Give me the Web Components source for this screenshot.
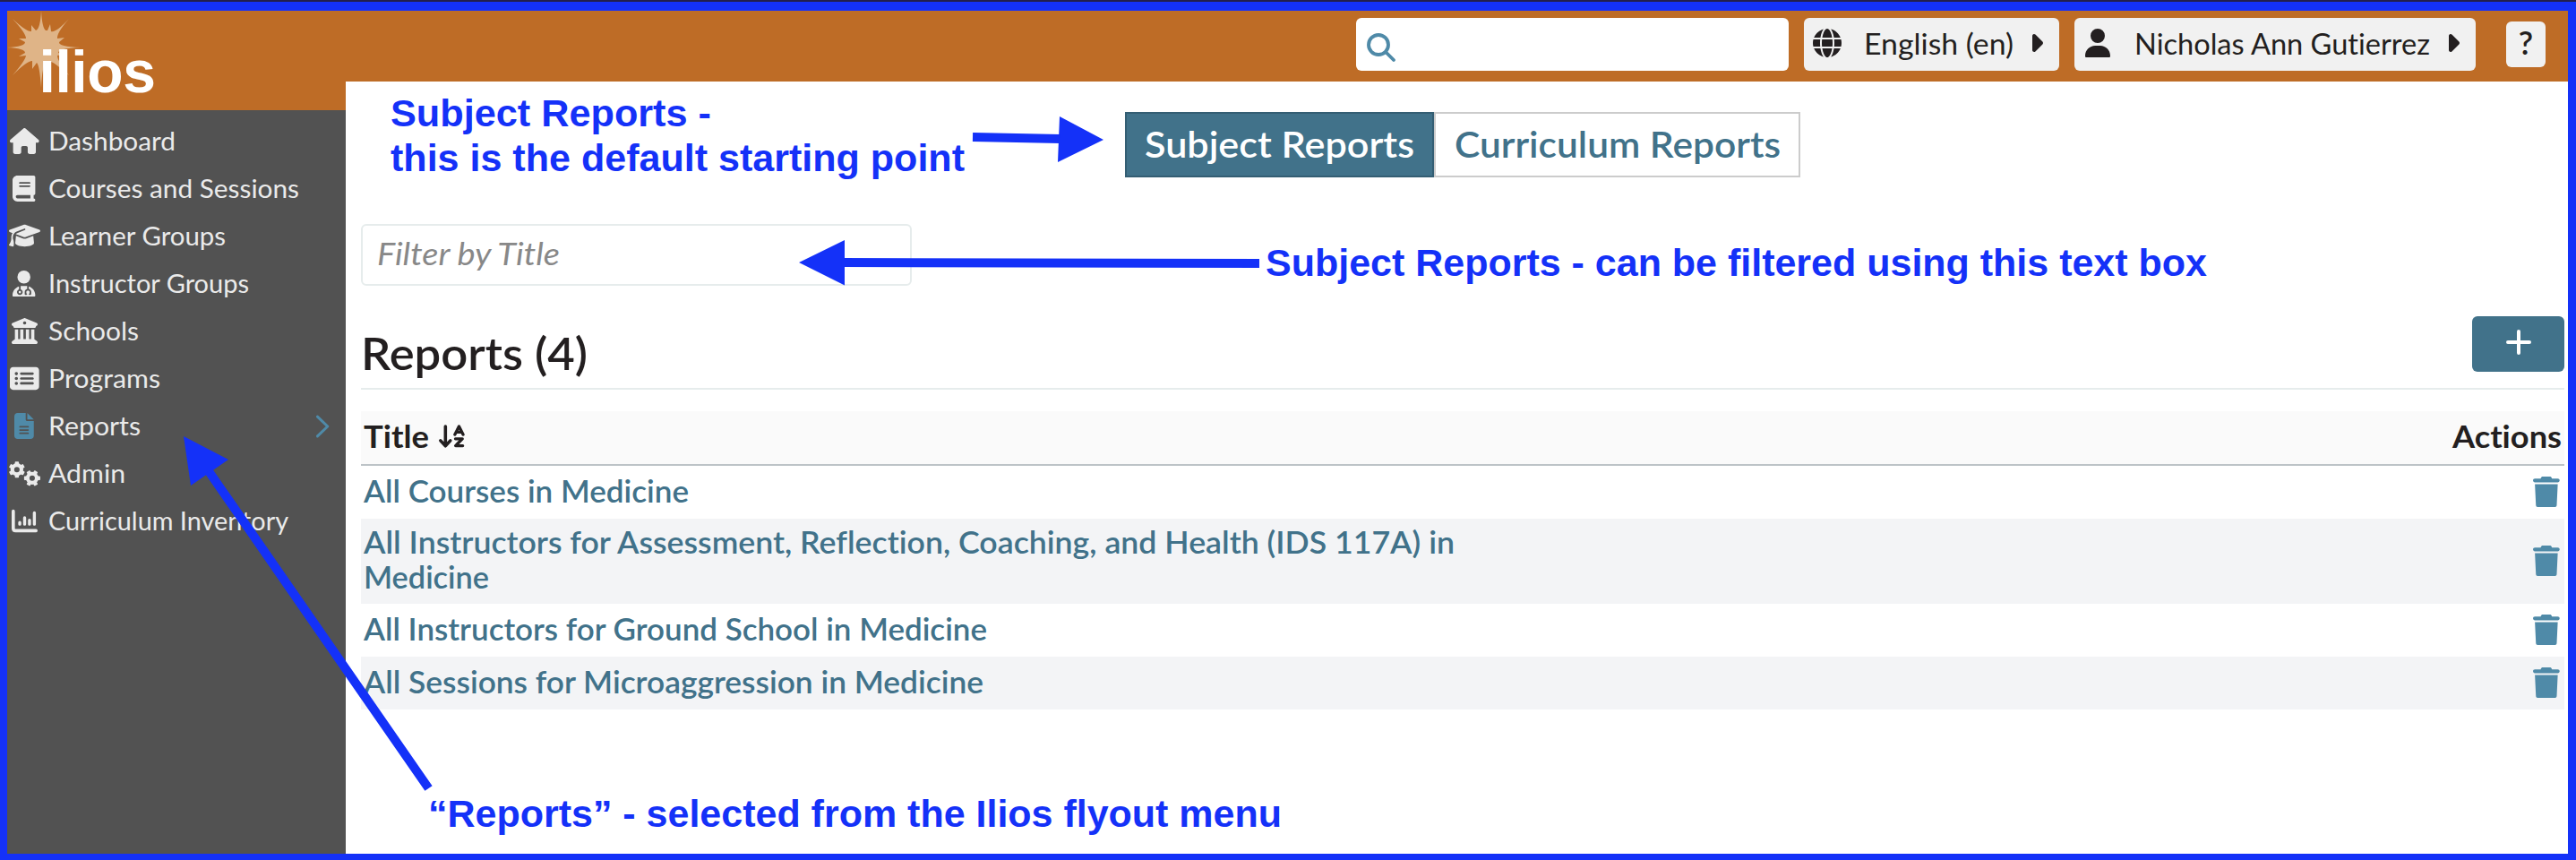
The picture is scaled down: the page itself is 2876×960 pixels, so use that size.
<!DOCTYPE html>
<html lang="en">
<head>
<meta charset="utf-8">
<title>Ilios</title>
<style>
  html, body { margin: 0; height: 100%; }
  body { background: #fff; font-family: Lato, "Noto Sans", sans-serif; font-variant-ligatures: none; color: #231f20; overflow: hidden; }
</style>
</head>
<body>
<ilios-app></ilios-app>
<script>
const shadow = (el, html) => { const r = el.attachShadow({ mode: "open" }); r.innerHTML = html; return r; };

const gear = (cx, cy, r, rot) => {
  let s = `<circle cx="${cx}" cy="${cy}" r="${r * .62}" fill="none" stroke="currentColor" stroke-width="${r * .5}"/>`;
  for (let i = 0; i < 6; i++) {
    s += `<rect x="${cx - r * .27}" y="${cy - r * 1.1}" width="${r * .54}" height="${r * .4}" rx="${r * .1}" fill="currentColor" transform="rotate(${rot + i * 60} ${cx} ${cy})"/>`;
  }
  return s;
};
const p = (d) => `<path fill="currentColor" d="${d}"/>`;
const line = (d, w) => `<path fill="none" stroke="currentColor" stroke-width="${w}" stroke-linecap="round" stroke-linejoin="round" d="${d}"/>`;

const ICONS = {
  house: [576, 512, p("M575.8 255.5c0 18-15 32.1-32 32.1h-32l.7 160.2c0 2.7-.2 5.4-.5 8.1V472c0 22.1-17.9 40-40 40H456c-1.1 0-2.2 0-3.3-.1c-1.4 .1-2.8 .1-4.2 .1H416 392c-22.1 0-40-17.9-40-40V448 384c0-17.7-14.3-32-32-32H256c-17.7 0-32 14.3-32 32v64 24c0 22.1-17.9 40-40 40H160 128.1c-1.5 0-3-.1-4.5-.2c-1.2 .1-2.4 .2-3.6 .2H104c-22.1 0-40-17.9-40-40V360c0-.9 0-1.9 .1-2.8V287.6H32c-18 0-32-14-32-32.1c0-9 3-17 10-24L266.4 8c7-7 15-8 22-8s15 2 21 7L564.8 231.5c8 7 12 15 11 24z")],
  book: [448, 512, p("M96 0C43 0 0 43 0 96V416c0 53 43 96 96 96H384h32c17.7 0 32-14.3 32-32s-14.3-32-32-32V384c17.7 0 32-14.3 32-32V32c0-17.7-14.3-32-32-32H384 96zm0 384H352v64H96c-17.7 0-32-14.3-32-32s14.3-32 32-32zm32-240c0-8.8 7.2-16 16-16H336c8.8 0 16 7.2 16 16s-7.2 16-16 16H144c-8.8 0-16-7.2-16-16zm16 48H336c8.8 0 16 7.2 16 16s-7.2 16-16 16H144c-8.8 0-16-7.2-16-16s7.2-16 16-16z")],
  cap: [640, 512, p("M320 32c-8.1 0-16.1 1.4-23.7 4.1L15.8 137.4C6.3 140.9 0 149.9 0 160s6.3 19.1 15.8 22.6l57.9 20.9C57.3 229.3 48 259.8 48 291.9v28.1c0 28.4-10.8 57.7-22.3 80.8c-6.5 13-13.9 25.8-22.5 37.6C0 442.7-.9 448.3 .9 453.4s6 8.9 11.2 10.2l64 16c4.2 1.1 8.7 .3 12.4-2s6.3-6.1 7.1-10.4c8.6-42.8 4.3-81.2-2.1-108.7C90.3 344.3 86 329.8 80 316.5V291.9c0-30.2 10.2-58.7 27.9-81.5c12.9-15.5 29.6-28 49.2-35.7l157-61.7c8.2-3.2 17.5 .8 20.7 9s-.8 17.5-9 20.7l-157 61.7c-12.4 4.9-23.3 12.4-32.2 21.6l159.6 57.6c7.6 2.7 15.6 4.1 23.7 4.1s16.1-1.4 23.7-4.1L624.2 182.6c9.5-3.4 15.8-12.5 15.8-22.6s-6.3-19.1-15.8-22.6L343.7 36.1C336.1 33.4 328.1 32 320 32zM128 408c0 35.3 86 72 192 72s192-36.7 192-72L496.7 262.6 354.5 314c-11.1 4-22.8 6-34.5 6s-23.5-2-34.5-6L143.3 262.6 128 408z")],
  doctor: [448, 512, p("M224 256a128 128 0 1 0 0-256 128 128 0 1 0 0 256zm-96 55.2C54 332.9 0 401.3 0 482.3C0 498.7 0 512 12 512H436c12 0 12-13.3 12-29.7c0-81-54-149.4-128-171.1V362c27.6 7.1 48 32.2 48 62v40c0 8.8-7.2 16-16 16H336c-8.8 0-16-7.2-16-16s7.2-16 16-16V424c0-17.7-14.3-32-32-32s-32 14.3-32 32v24c8.8 0 16 7.2 16 16s-7.2 16-16 16H256c-8.8 0-16-7.2-16-16V424c0-29.8 20.4-54.9 48-62V304.9c-6-.6-12.1-.9-18.3-.9H178.3c-6.2 0-12.3 .3-18.3 .9v65.4c23.1 6.9 40 28.3 40 53.7c0 30.9-25.1 56-56 56s-56-25.1-56-56c0-25.4 16.9-46.8 40-53.7V311.2zM144 448a24 24 0 1 0 0-48 24 24 0 1 0 0 48z")],
  columns: [512, 512, p("M243.4 2.6l-224 96c-14 6-21.8 21-18.7 35.8S16.8 160 32 160v8c0 13.3 10.7 24 24 24H456c13.3 0 24-10.7 24-24v-8c15.2 0 28.3-10.7 31.3-25.6s-4.8-29.9-18.7-35.8l-224-96c-8-3.4-17.2-3.4-25.2 0zM128 224H64V420.3c-.6 .3-1.2 .7-1.8 1.1l-48 32c-11.7 7.8-17 22.4-12.9 35.9S17.9 512 32 512H480c14.1 0 26.5-9.2 30.6-22.7s-1.1-28.1-12.9-35.9l-48-32c-.6-.4-1.2-.7-1.8-1.1V224H384V416H344V224H280V416H232V224H168V416H128V224zM256 64a32 32 0 1 1 0 64 32 32 0 1 1 0-64z")],
  list: [576, 512, p("M0 96C0 60.7 28.7 32 64 32H512c35.3 0 64 28.7 64 64V416c0 35.3-28.7 64-64 64H64c-35.3 0-64-28.7-64-64V96zM128 288a32 32 0 1 0 0-64 32 32 0 1 0 0 64zm32-128a32 32 0 1 0 -64 0 32 32 0 1 0 64 0zM128 384a32 32 0 1 0 0-64 32 32 0 1 0 0 64zm96-248c-13.3 0-24 10.7-24 24s10.7 24 24 24H448c13.3 0 24-10.7 24-24s-10.7-24-24-24H224zm0 96c-13.3 0-24 10.7-24 24s10.7 24 24 24H448c13.3 0 24-10.7 24-24s-10.7-24-24-24H224zm0 96c-13.3 0-24 10.7-24 24s10.7 24 24 24H448c13.3 0 24-10.7 24-24s-10.7-24-24-24H224z")],
  file: [384, 512, p("M64 0C28.7 0 0 28.7 0 64V448c0 35.3 28.7 64 64 64H320c35.3 0 64-28.7 64-64V160H256c-17.7 0-32-14.3-32-32V0H64zM256 0V128H384L256 0zM112 256H272c8.8 0 16 7.2 16 16s-7.2 16-16 16H112c-8.8 0-16-7.2-16-16s7.2-16 16-16zm0 64H272c8.8 0 16 7.2 16 16s-7.2 16-16 16H112c-8.8 0-16-7.2-16-16s7.2-16 16-16zm0 64H272c8.8 0 16 7.2 16 16s-7.2 16-16 16H112c-8.8 0-16-7.2-16-16s7.2-16 16-16z")],
  gears: [640, 512, gear(162, 168, 150, 0) + gear(474, 344, 150, 30)],
  chart: [512, 512, line("M32 64V400Q32 448 80 448H480", 64) + line("M160 288V320M256 192V320M352 240V320M448 96V320", 60)],
  chevron: [320, 512, line("M48 40L272 256L48 472", 60)],
  globe: [512, 512, p("M352 256c0 22.2-1.2 43.6-3.3 64H163.3c-2.2-20.4-3.3-41.8-3.3-64s1.2-43.6 3.3-64H348.7c2.2 20.4 3.3 41.8 3.3 64zm28.8-64H503.9c5.3 20.5 8.1 41.9 8.1 64s-2.8 43.5-8.1 64H380.8c2.1-20.6 3.2-42 3.2-64s-1.1-43.4-3.2-64zm112.6-32H376.7c-10-63.9-29.8-117.4-55.3-151.6c78.3 20.7 142 77.5 171.9 151.6zm-149.1 0H167.7c6.1-36.4 15.5-68.6 27-94.7c10.5-23.6 22.2-40.7 33.5-51.5C239.4 3.2 248.7 0 256 0s16.6 3.2 27.8 13.8c11.3 10.8 23 27.9 33.5 51.5c11.6 26 20.9 58.2 27 94.7zm-209 0H18.6C48.6 85.9 112.2 29.1 190.6 8.4C165.1 42.6 145.3 96.1 135.3 160zM8.1 192H131.2c-2.1 20.6-3.2 42-3.2 64s1.1 43.4 3.2 64H8.1C2.8 299.5 0 278.1 0 256s2.8-43.5 8.1-64zM194.7 446.6c-11.6-26-20.9-58.2-27-94.6H344.3c-6.1 36.4-15.5 68.6-27 94.6c-10.5 23.6-22.2 40.7-33.5 51.5C272.6 508.8 263.3 512 256 512s-16.6-3.2-27.8-13.8c-11.3-10.8-23-27.9-33.5-51.5zM135.3 352c10 63.9 29.8 117.4 55.3 151.6C112.2 482.9 48.6 426.1 18.6 352H135.3zm358.1 0c-30 74.1-93.6 130.9-171.9 151.6c25.5-34.2 45.2-87.7 55.3-151.6H493.4z")],
  user: [448, 512, p("M224 256A128 128 0 1 0 224 0a128 128 0 1 0 0 256zm-45.7 48C79.8 304 0 383.8 0 482.3C0 498.7 3 512 19.700 512H428.300c16.400 0 19.700-13.300 19.700-29.700C448 383.800 368.200 304 269.700 304H178.300z")],
  caret: [192, 320, p("M182.600 137.400c12.500 12.500 12.500 32.800 0 45.300l-128 128c-9.200 9.200-22.900 11.900-34.900 6.900S0 301 0 288V32c0-12.900 7.800-24.600 19.800-29.600s25.700-2.200 34.900 6.900l128 128z")],
  search: [512, 512, `<circle cx="208" cy="208" r="176" fill="none" stroke="currentColor" stroke-width="62"/>` + line("M336 336L480 480", 62)],
  trash: [448, 512, p("M135 17.700L128 32H32C14.300 32 0 46.300 0 64S14.300 96 32 96H416c17.700 0 32-14.300 32-32s-14.300-32-32-32H320l-7.200-14.300C307.400 6.800 296.300 0 284.200 0H163.800c-12.100 0-23.200 6.800-28.600 17.700zM416 128H32L49 482c1 18 12 30 29 30H370c17 0 28-12 29-30L416 128z")],
  plus: [448, 448, line("M32 224H416M224 32V416", 64)],
  sort: [576, 512, line("M144 40V456M36 352L144 468L252 352", 70) + line("M352 216L442 40L532 216M388 164H496", 66) + line("M364 312H516L368 464H524", 66)],
  sun: [84, 86, p("M38 0 Q39 19 43 22 L45 22 L48 15 L49 23 Q54 25 69 9 Q55 25 56 31 L64 30 L58 35 Q57 40 82 41 Q57 42 57 47 L64 49 L56 50 Q56 56 69 72 Q53 58 49 57 L48 65 L44 58 Q39 60 38 86 Q36 60 33 58 L28 65 L28 56 Q22 56 6 72 Q20 56 21 50 L13 51 L20 47 Q20 42 0 41 Q20 40 20 35 L13 31 L21 31 Q21 25 6 9 Q22 24 27 23 L27 16 L32 22 Q37 20 38 0Z")]
};

/* <ui-icon name size>: size is the drawn height in px */
customElements.define("ui-icon", class extends HTMLElement {
  connectedCallback() {
    if (this.shadowRoot) return;
    const [w, h, body] = ICONS[this.getAttribute("name")];
    const s = +this.getAttribute("size");
    shadow(this, `<style>:host{display:block;flex:none}svg{display:block;overflow:visible}</style>
      <svg viewBox="0 0 ${w} ${h}" width="${(s * w / h).toFixed(2)}" height="${s}" aria-hidden="true">${body}</svg>`);
  }
});

/* <fit-text w>: one line of text, widened or narrowed to fill w pixels */
customElements.define("fit-text", class extends HTMLElement {
  connectedCallback() {
    if (this.shadowRoot) return;
    const w = +this.getAttribute("w");
    const r = shadow(this, `<style>:host{display:block;flex:none;white-space:nowrap;width:${w}px}span{display:inline-block;transform-origin:0 50%}</style><span><slot></slot></span>`);
    const fit = () => {
      const span = r.querySelector("span");
      if (span.offsetWidth) {
        span.style.transform = "none";
        span.style.transform = `scaleX(${(w / span.getBoundingClientRect().width).toFixed(4)})`;
      }
    };
    fit();
    requestAnimationFrame(fit);
  }
});

customElements.define("nav-item", class extends HTMLElement {
  connectedCallback() {
    const on = this.hasAttribute("active");
    shadow(this, `<style>
      :host{display:flex;align-items:center;height:53.1px;font-size:28.400px;line-height:53px;color:#eaeaea}
      .i{width:38px;display:flex;justify-content:center;color:${on ? "#4f8aa8" : "#eaeaea"}}
      fit-text{margin-left:8px}
      .c{margin-left:auto;margin-right:18px;color:#4f8aa8}
      </style><div class="i"><ui-icon name="${this.getAttribute("icon")}" size="${this.getAttribute("size") || 29}"></ui-icon></div>
      <fit-text w="${this.getAttribute("w")}">${this.getAttribute("label")}</fit-text>
      ${on ? `<ui-icon class="c" name="chevron" size="26"></ui-icon>` : ""}`);
  }
});

customElements.define("side-nav", class extends HTMLElement {
  connectedCallback() {
    shadow(this, `<style>
      :host{display:flex;flex-direction:column;background:#525252}
      .logo{height:111px;background:#be6c26;position:relative;color:#dfb487;flex:none}
      .logo span{position:absolute;left:35.500px;top:28px;font:bold 66px/80px "Liberation Sans",Arial,sans-serif;letter-spacing:-.4px;color:#fff}
      nav{padding-top:7.600px}
      </style>
      <div class="logo"><ui-icon name="sun" size="86"></ui-icon><span>ilios</span></div>
      <nav>
      <nav-item icon="house" label="Dashboard" w="142"></nav-item>
      <nav-item icon="book" label="Courses and Sessions" w="280"></nav-item>
      <nav-item icon="cap" label="Learner Groups" w="198" size="28"></nav-item>
      <nav-item icon="doctor" label="Instructor Groups" w="224"></nav-item>
      <nav-item icon="columns" label="Schools" w="101"></nav-item>
      <nav-item icon="list" label="Programs" w="125"></nav-item>
      <nav-item icon="file" label="Reports" w="103" active></nav-item>
      <nav-item icon="gears" label="Admin" w="86" size="28"></nav-item>
      <nav-item icon="chart" label="Curriculum Inventory" w="268"></nav-item>
      </nav>`);
  }
});

customElements.define("top-bar", class extends HTMLElement {
  connectedCallback() {
    shadow(this, `<style>
      :host{display:flex;align-items:flex-start;justify-content:flex-end;height:79px;background:#be6c26;padding:8px 25px 0 0;box-sizing:border-box;font-size:32px;line-height:57px}
      .box{display:flex;height:59px;box-sizing:border-box;border-radius:6px;background:#f1f1f1;margin-left:17px}
      .search{width:483px;background:#fff;color:#4f8aa8;padding:17px 0 0 12px}
      .lang{width:285px;padding-left:10px}
      .user{width:448px;padding-left:12px}
      .box ui-icon:first-child{margin-top:12px}
      .search ui-icon:first-child{margin-top:0}
      .lang fit-text{margin-left:25px}.user fit-text{margin-left:27px}
      .t{margin:18px 0 0 auto}
      .lang .t{margin-right:18px}.user .t{margin-right:18px}
      .help{width:44px;height:51px;margin:4px 0 0 34px;justify-content:center;font-weight:600;font-size:36px;line-height:46px}
      </style>
      <div class="box search"><ui-icon name="search" size="32"></ui-icon></div>
      <div class="box lang"><ui-icon name="globe" size="32"></ui-icon><fit-text w="167">English (en)</fit-text><ui-icon class="t" name="caret" size="20"></ui-icon></div>
      <div class="box user"><ui-icon name="user" size="32"></ui-icon><fit-text w="330">Nicholas Ann Gutierrez</fit-text><ui-icon class="t" name="caret" size="20"></ui-icon></div>
      <div class="box help">?</div>`);
  }
});

customElements.define("report-tabs", class extends HTMLElement {
  connectedCallback() {
    shadow(this, `<style>
      :host{display:flex;font-size:40px;font-weight:600;line-height:68px}
      div{box-sizing:border-box;height:73px;border:2px solid #ccc;color:#41728a;padding-left:21px}
      .on{width:345px;background:#41728a;border-color:#345e73;color:#fff;padding-left:20px}
      .off{width:409px}
      </style><div class="on"><fit-text w="301">Subject Reports</fit-text></div><div class="off"><fit-text w="364">Curriculum Reports</fit-text></div>`);
  }
});

customElements.define("report-row", class extends HTMLElement {
  connectedCallback() {
    shadow(this, `<style>
      :host{display:flex;align-items:center;justify-content:space-between;box-sizing:border-box;min-height:59px;padding:0 5px 0 3px;font-size:34.500px;font-weight:600;line-height:39px;color:#41728a}
      :host(:nth-of-type(even)){background:#f3f4f6}
      div{padding:6px 0 11px}
      ui-icon{color:#4f8aa8;margin-bottom:2px}
      </style><div><slot></slot></div><ui-icon name="trash" size="34"></ui-icon>`);
  }
});

customElements.define("report-list", class extends HTMLElement {
  connectedCallback() {
    shadow(this, `<style>
      :host{display:block}
      .bar{display:flex;justify-content:space-between;height:80px;border-bottom:2px solid #e6ecec}
      h2{margin:0;font-size:49px;font-weight:600;line-height:83px}
      .add{width:103px;height:62px;border-radius:6px;background:#41728a;color:#fff;display:flex;justify-content:center}
      .add ui-icon{margin-top:15px}
      .head{display:flex;justify-content:space-between;height:59px;margin-top:24px;background:#fafafa;border-bottom:2px solid #bdc3c7;font-size:34.500px;font-weight:700;line-height:55px;padding:0 3px}
      .head div{display:flex;gap:11px}
      .head ui-icon{margin-top:15px}
      </style>
      <div class="bar"><h2><fit-text w="253">Reports (4)</fit-text></h2><div class="add"><ui-icon name="plus" size="28"></ui-icon></div></div>
      <div class="head"><div><fit-text w="73">Title</fit-text><ui-icon name="sort" size="26"></ui-icon></div><fit-text w="122">Actions</fit-text></div>
      <report-row><fit-text w="363">All Courses in Medicine</fit-text></report-row>
      <report-row><fit-text w="1218">All Instructors for Assessment, Reflection, Coaching, and Health (IDS 117A) in</fit-text><fit-text w="140">Medicine</fit-text></report-row>
      <report-row><fit-text w="696">All Instructors for Ground School in Medicine</fit-text></report-row>
      <report-row><fit-text w="692">All Sessions for Microaggression in Medicine</fit-text></report-row>`);
  }
});

/* Call-outs drawn over the page: free text labels and arrows */
customElements.define("call-outs", class extends HTMLElement {
  connectedCallback() {
    shadow(this, `<style>
      :host{position:absolute;inset:0;color:#1431f8;font:bold 43px/50px "Liberation Sans",Arial,sans-serif}
      svg{position:absolute;inset:0}
      .n{position:absolute}
      </style>
      <svg width="2876" height="960" fill="#1431f8" stroke="#1431f8">
        <path stroke="none" d="M1183 130L1232 156L1181 181ZM892 293L943 268V318.500ZM205 487L255 513L213 542Z"/>
        <path stroke-width="10" d="M1086 153L1184 155M940 293L1406 294M233 526L478.500 880"/>
      </svg>
      <div class="n" style="left:436px;top:101px"><fit-text w="358">Subject Reports -</fit-text><fit-text w="641">this is the default starting point</fit-text></div>
      <div class="n" style="left:1413px;top:268px"><fit-text w="1051">Subject Reports - can be filtered using this text box</fit-text></div>
      <div class="n" style="left:478px;top:883px"><fit-text w="953">“Reports” - selected from the Ilios flyout menu</fit-text></div>`);
  }
});

customElements.define("ilios-app", class extends HTMLElement {
  connectedCallback() {
    shadow(this, `<style>
      :host{display:grid;position:relative;grid-template-columns:378px 1fr;width:2876px;height:960px;box-sizing:border-box;border:solid #1431f8;border-width:12px 9px 7px 8px;background:#fff}
      .edge{position:absolute;left:-8px;right:-9px;top:-12px;height:2px;background:#231f4e}
      main{padding:0 4px 0 17px}
      report-tabs{margin:34px 0 0 853px}
      .filter{box-sizing:border-box;width:615px;height:69px;border:2px solid #e6ecec;border-radius:6px;margin-top:52px;padding-left:16px;font-size:34px;line-height:61px;font-style:italic;color:#888}
      report-list{margin-top:34px}
      call-outs{left:-8px;top:-12px;right:auto;bottom:auto;width:2876px;height:960px}
      </style>
      <side-nav></side-nav>
      <div><top-bar></top-bar><main><report-tabs></report-tabs>
      <div class="filter"><fit-text w="204">Filter by Title</fit-text></div>
      <report-list></report-list></main></div>
      <div class="edge"></div><call-outs></call-outs>`);
  }
});
</script>
</body>
</html>
